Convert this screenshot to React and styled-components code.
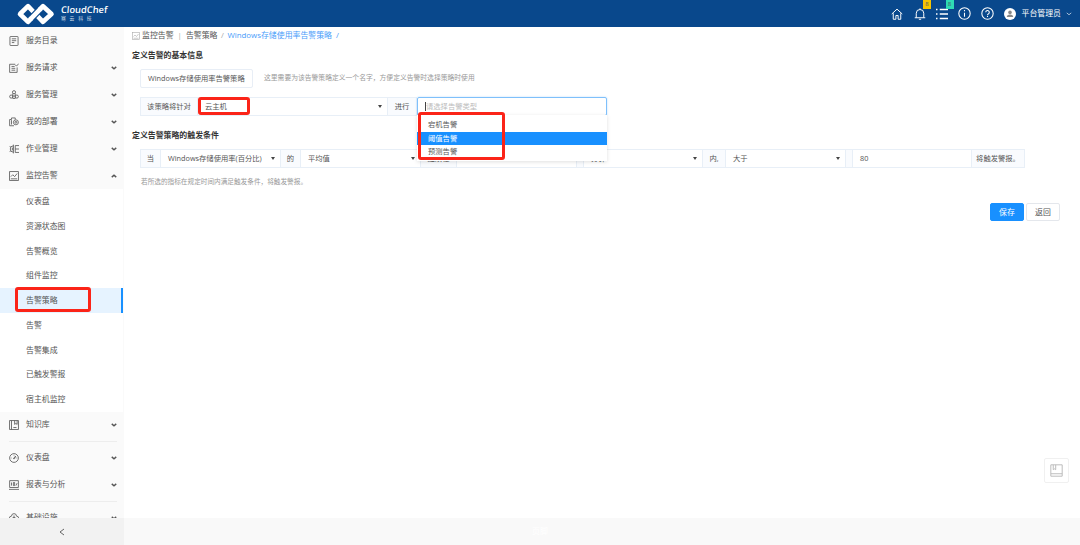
import styled, { createGlobalStyle } from 'styled-components';

const GlobalStyle = createGlobalStyle`
	* {
		box-sizing: border-box;
	}
	body {
		margin: 0;
		overflow: hidden;
		background: #fff;
		color: #555;
		font-family: 'Open Sans', 'Noto Sans CJK SC', sans-serif;
		font-size: 7.9px;
	}
`;

const ICONS = {
	catalog: <><rect x='1.500' y='0.700' width='13' height='14.600' rx='1' /><path d='M4.500 4.500h7M4.500 7.500h7M4.500 10.500h4' /></>,
	request: <><path d='M13 7v8H1V2h9' /><path d='M4 5.500h5M4 8.500h6M4 11.500h6M10 3l2 2 3.500-4' /></>,
	service: <><circle cx='8' cy='3.500' r='2.500' /><circle cx='3.500' cy='10.500' r='2.500' /><circle cx='12.500' cy='10.500' r='2.500' /><path d='M6 5.500v8M10 5.500v8M6 13.500h4M8 8v3' /></>,
	deploy: <><path d='M8 14H1V4h3V1.500h6V4' /><path d='M4 5v7' /><circle cx='11' cy='8.500' r='4' /><circle cx='11' cy='8.500' r='1.500' /></>,
	job: <><path d='M7 3a5 5 0 1 0 0 10M7 6a2 2 0 1 0 0 4M7 1v14M10 2.500h6M10 8h6M10 13.500h6M10 2.500v11M1 4l2 1M1 12l2-1' /></>,
	monitor: <><rect x='1' y='1' width='14' height='14' /><path d='M3 9l3-3 3 3 4-5M3 12.500h10' /></>,
	book: <><rect x='1' y='1' width='14' height='14' /><path d='M4 1v14M7 12h5M9 1v6l2-1.500L13 7V1' /></>,
	gauge: <><circle cx='8' cy='8' r='7' /><path d='M10.500 5L9 9H7zM8 3v1M3 8h1M12 8h1' /></>,
	report: <><path d='M1 1h14v11H1zM0 15h16M4 4v5M7 4h2v5H7zM11 9l2-4' /></>,
	infra: <><path d='M4 12a3.500 3.500 0 0 1 0-7 4 4 0 0 1 8 0 3.500 3.500 0 0 1 0 7' /><circle cx='8' cy='10' r='3' /><path d='M8 7V4M5 13l-2 2M11 13l2 2' /></>,
	home: <path d='M1 8l7-6.500L15 8M3 7v8h3.500v-5h3v5H13V7' />,
	bell: <path d='M1 13h14M3 13V7a5 5 0 0 1 10 0v6M8 2V.5M6.500 15h3' />,
	list: <path d='M0 2h2M5 2h11M0 8h2M5 8h11M0 14h2M5 14h11' />,
	info: <><circle cx='8' cy='8' r='7' /><path d='M8 7v5M8 3.700v1.500' /></>,
	help: <><circle cx='8' cy='8' r='7' /><path d='M5.800 6.500a2.200 2.200 0 1 1 3.200 2Q8 9 8 10M8 11.200v1.200' /></>,
	save: <><path d='M1 1h14v14H1zM1 12h14M4 1v6l1.500-1L7 7V1' /></>,
	down: <path d='M2 5l6 5 6-5' />,
	up: <path d='M2 11l6-5 6 5' />,
	left: <path d='M12 2L4 8l8 6' />,
};

const Icon = ({ name, size = 10, stroke = 1.3 }) => (
	<IconSvg $size={size} $stroke={stroke} viewBox='0 0 16 16'>{ICONS[name]}</IconSvg>
);

const MENU = [
	{ icon: 'catalog', label: '服务目录' },
	{ icon: 'request', label: '服务请求', arrow: 'down' },
	{ icon: 'service', label: '服务管理', arrow: 'down' },
	{ icon: 'deploy', label: '我的部署', arrow: 'down' },
	{ icon: 'job', label: '作业管理', arrow: 'down' },
	{ icon: 'monitor', label: '监控告警', arrow: 'up' },
];

const SUBMENU = ['仪表盘', '资源状态图', '告警概览', '组件监控', '告警策略', '告警', '告警集成', '已触发警报', '宿主机监控'];

const MenuItem = ({ icon, label, arrow }) => (
	<MenuRow>
		<Icon name={icon} />
		<MenuLabel>{label}</MenuLabel>
		{arrow && <Icon name={arrow} size={6} stroke={3.6} />}
	</MenuRow>
);

const Logo = () => (
	<LogoLink>
		<LogoMark viewBox='0 0 39 24'>
			<path d='M4 12L12 4.200L27 19.800L35.500 12L27 4.200L12 19.800Z' />
			<path d='M15.500 16.200L23.500 7.800' stroke='#09488c' strokeWidth='7' />
			<path d='M14 17.700L25 6.300' />
		</LogoMark>
		<LogoText>
			<LogoName>CloudChef</LogoName>
			<LogoSub>骞云科技</LogoSub>
		</LogoText>
	</LogoLink>
);

const Select = ({ width, children }) => (
	<Field $width={width}>
		<span>{children}</span>
		<Caret />
	</Field>
);

const App = () => {
	return (
		<Page>
			<GlobalStyle />
			<Header>
				<Logo />
				<Tools>
					<Tool><Icon name='home' size={12} /></Tool>
					<Tool>
						<Icon name='bell' size={12} />
						<Badge $color='#f5c400'>8</Badge>
					</Tool>
					<Tool>
						<Icon name='list' size={12} stroke={1.8} />
						<Badge $color='#2fdcb4'>8</Badge>
					</Tool>
					<Tool><Icon name='info' size={13} /></Tool>
					<Tool><Icon name='help' size={13} /></Tool>
					<Avatar viewBox='0 0 12 12'>
						<circle cx='6' cy='6' r='6' fill='#fff' />
						<circle cx='6' cy='4.400' r='1.800' fill='#888' />
						<path d='M2.800 9a3.200 2.500 0 0 1 6.400 0z' fill='#888' />
					</Avatar>
					<UserName>平台管理员</UserName>
					<Icon name='down' size={6} stroke={1.7} />
				</Tools>
			</Header>
			<Body>
				<Sidebar>
					<MenuScroll>
						{MENU.map((item) => <MenuItem key={item.label} {...item} />)}
						<SubMenu>
							{SUBMENU.map((label) => (
								<SubItem key={label} $active={label === '告警策略'}>
									{label}
									{label === '告警策略' && <Marker $left={15} $top={-1} $width={76} $height={25} />}
								</SubItem>
							))}
						</SubMenu>
						<MenuItem icon='book' label='知识库' arrow='down' />
						<Divider />
						<MenuItem icon='gauge' label='仪表盘' arrow='down' />
						<MenuItem icon='report' label='报表与分析' arrow='down' />
						<Divider />
						<MenuItem icon='infra' label='基础设施' arrow='down' />
					</MenuScroll>
					<Collapse><Icon name='left' size={8} stroke={1.8} /></Collapse>
				</Sidebar>
				<Main>
					<Content>
						<Breadcrumb>
							<CrumbIcon><Icon name='monitor' size={8} stroke={1.2} /></CrumbIcon>
							<span>监控告警</span>
							<Separator $space={4}>|</Separator>
							<span>告警策略</span>
							<Separator $space={3.5}>/</Separator>
							<Current>Windows存储使用率告警策略</Current>
							<Current $slash>/</Current>
						</Breadcrumb>
						<Title>定义告警的基本信息</Title>
						<NameRow>
							<NameInput>Windows存储使用率告警策略</NameInput>
							<Hint>这里需要为该告警策略定义一个名字，方便定义告警时选择策略时使用</Hint>
						</NameRow>
						<FormRow>
							<Addon $width={57}>该策略将针对</Addon>
							<Select width={190}>云主机</Select>
							<Addon $width={29}>进行</Addon>
							<TypeSelect>
								<Placeholder>请选择告警类型</Placeholder>
								<Dropdown>
									<Option>宕机告警</Option>
									<Option $active>阈值告警</Option>
									<Option>预测告警</Option>
									<Marker $left={1} $top={-3} $width={87} $height={48} />
								</Dropdown>
							</TypeSelect>
							<Marker $left={57} $top={0} $width={52} $height={18} />
						</FormRow>
						<Title $second>定义告警策略的触发条件</Title>
						<FormRow $last>
							<Addon $width={20}>当</Addon>
							<Select width={120}>Windows存储使用率(百分比)</Select>
							<Addon $width={20}>的</Addon>
							<Select width={120}>平均值</Select>
							<Addon $width={36}>连续在</Addon>
							<Field $width={120} />
							<Addon $width={7} />
							<Select width={119}>分钟</Select>
							<Addon $width={23}>内,</Addon>
							<Select width={120}>大于</Select>
							<Addon $width={7} />
							<Field $width={119}>80</Field>
							<Addon $width={53}>将触发警报。</Addon>
						</FormRow>
						<Note>若所选的指标在规定时间内满足触发条件，将触发警报。</Note>
						<Actions>
							<Button $primary>保存</Button>
							<Button>返回</Button>
						</Actions>
						<SaveTool><Icon name='save' size={13} stroke={1.2} /></SaveTool>
					</Content>
					<Footer>页脚</Footer>
				</Main>
			</Body>
		</Page>
	);
};

const IconSvg = styled.svg`
	width: ${({ $size }) => $size}px;
	height: ${({ $size }) => $size}px;
	flex: none;
	fill: none;
	stroke: currentColor;
	stroke-width: ${({ $stroke }) => $stroke};
`;

const Page = styled.div`
	width: 1080px;
	height: 545px;
	display: flex;
	flex-direction: column;
	line-height: 1;
	white-space: nowrap;
`;

const Header = styled.header`
	height: 27px;
	flex: none;
	display: flex;
	justify-content: space-between;
	align-items: center;
	padding: 0 8px 0 16px;
	background: #09488c;
	color: #fff;
`;

const LogoLink = styled.div`
	display: flex;
	align-items: center;
	gap: 6px;
`;

const LogoMark = styled.svg`
	width: 39px;
	height: 24px;
	fill: none;
	stroke: #fff;
	stroke-width: 4.6;
	stroke-linejoin: round;
`;

const LogoText = styled.div`
	display: flex;
	flex-direction: column;
	gap: 1px;
	padding-bottom: 2px;
`;

const LogoName = styled.span`
	font: 600 9.3px/11px 'Open Sans', sans-serif;
	transform: skewX(-5deg);
`;

const LogoSub = styled.span`
	font-size: 4.8px;
	letter-spacing: 3.8px;
	opacity: .8;
`;

const Tools = styled.div`
	height: 27px;
	display: flex;
	align-items: center;
`;

const Tool = styled.div`
	position: relative;
	width: 22.5px;
	display: flex;
	justify-content: center;
`;

const Badge = styled.span`
	position: absolute;
	top: -8px;
	right: 0;
	width: 8px;
	height: 9px;
	background: ${({ $color }) => $color};
	color: #456;
	font-size: 6px;
	line-height: 9px;
	text-align: center;
`;

const Avatar = styled.svg`
	width: 12px;
	height: 12px;
	margin-left: 5px;
`;

const UserName = styled.span`
	margin: 0 5px 0 6px;
`;

const Body = styled.div`
	flex: 1;
	min-height: 0;
	display: flex;
`;

const Sidebar = styled.aside`
	width: 124px;
	flex: none;
	display: flex;
	flex-direction: column;
	background: #fafafa;
`;

const MenuScroll = styled.nav`
	height: 491px;
	overflow: hidden;
`;

const MenuRow = styled.div`
	height: 27px;
	display: flex;
	align-items: center;
	padding: 0 7px 0 9px;
`;

const MenuLabel = styled.span`
	flex: 1;
	margin-left: 7px;
`;

const SubMenu = styled.div`
	width: 123px;
	background: #fff;
`;

const SubItem = styled.div`
	position: relative;
	height: 24.75px;
	padding-left: 26px;
	line-height: 25px;
	background: ${({ $active }) => ($active ? '#e6f3ff' : '#fff')};
	box-shadow: ${({ $active }) => ($active ? 'inset -2px 0 #1890ff' : 'none')};
`;

/* red frame laid over the highlighted control */
const Marker = styled.div`
	position: absolute;
	z-index: 3;
	left: ${({ $left }) => $left}px;
	top: ${({ $top }) => $top}px;
	width: ${({ $width }) => $width}px;
	height: ${({ $height }) => $height}px;
	border: 3px solid #fb2418;
	border-radius: 3px;
`;

const Divider = styled.div`
	height: 1px;
	margin: 2px 7px 3px 9px;
	background: #ededed;
`;

const Collapse = styled.div`
	height: 27px;
	display: flex;
	align-items: center;
	justify-content: center;
	background: #f2f2f2;
`;

const Main = styled.main`
	flex: 1;
	display: flex;
	flex-direction: column;
`;

const Content = styled.section`
	height: 491px;
	display: flex;
	flex-direction: column;
	align-items: flex-start;
	padding: 4px 11px 0 8px;
`;

const Breadcrumb = styled.div`
	height: 10px;
	display: flex;
	align-items: center;
`;

const CrumbIcon = styled.span`
	display: flex;
	margin-right: 2px;
	color: #aaa;
`;

const Separator = styled.span`
	margin: 0 ${({ $space }) => $space}px;
	color: #aaa;
`;

const Current = styled.span`
	margin-left: ${({ $slash }) => ($slash ? 4 : 0)}px;
	color: #4a9dfa;
`;

const Title = styled.h3`
	height: 10px;
	margin: ${({ $second }) => ($second ? '14px 0 9px' : '9px 0 9px')};
	font-size: 7.9px;
	line-height: 10px;
	color: #333;
`;

const NameRow = styled.div`
	display: flex;
	align-items: center;
	margin-left: 8px;
`;

const NameInput = styled.div`
	width: 113px;
	height: 19px;
	padding-left: 7px;
	border: 1px solid #e8eef6;
	border-radius: 2px;
	font-size: 7.3px;
	line-height: 17px;
`;

const Hint = styled.span`
	margin-left: 11px;
	font-size: 6.8px;
	color: #999;
`;

const FormRow = styled.div`
	position: relative;
	display: flex;
	margin: ${({ $last }) => ($last ? '0' : '9px')} 0 0 8px;
	font-size: 7.3px;
	border-left: 1px solid #e8eff7;
`;

const Addon = styled.div`
	width: ${({ $width }) => $width}px;
	height: 19px;
	display: flex;
	align-items: center;
	justify-content: center;
	background: #f9fbfe;
	border: solid #e8eff7;
	border-width: 1px 1px 1px 0;
`;

const Field = styled.div`
	width: ${({ $width }) => $width}px;
	height: 19px;
	display: flex;
	align-items: center;
	justify-content: space-between;
	padding: 0 5px 0 7px;
	background: #fff;
	border: solid #e8eff7;
	border-width: 1px 1px 1px 0;
`;

const Caret = styled.i`
	border: 2.5px solid transparent;
	border-top: 3px solid #444;
	border-bottom: 0;
`;

const TypeSelect = styled.div`
	position: relative;
	width: 190px;
	height: 19px;
	padding: 4px 7px;
	border: 1px solid #7fc0fb;
	border-radius: 2px;
	box-shadow: 0 0 2px #b5dafb;
`;

const Placeholder = styled.div`
	height: 9px;
	border-left: 1px solid #444;
	line-height: 8px;
	color: #bbb;
`;

const Dropdown = styled.div`
	position: absolute;
	z-index: 2;
	top: 17px;
	left: -1px;
	width: 190px;
	height: 46px;
	padding-top: 3px;
	background: #fff;
	box-shadow: 0 1px 4px rgba(0, 0, 0, .13);
`;

const Option = styled.div`
	height: 13.5px;
	padding-left: 11px;
	line-height: 12px;
	background: ${({ $active }) => ($active ? '#1890ff' : '#fff')};
	color: ${({ $active }) => ($active ? '#fff' : '#555')};
`;

const Note = styled.p`
	margin: 11px 0 0 9px;
	font-size: 6.65px;
	color: #999;
`;

const Actions = styled.div`
	align-self: flex-end;
	display: flex;
	gap: 2px;
	margin: 17px 9px 0 0;
`;

const Button = styled.button`
	width: 34px;
	height: 18px;
	padding: 0;
	border: 1px solid ${({ $primary }) => ($primary ? '#1890ff' : '#e4e7ec')};
	border-radius: 2px;
	background: ${({ $primary }) => ($primary ? '#1890ff' : '#fff')};
	color: ${({ $primary }) => ($primary ? '#fff' : '#555')};
	font-family: inherit;
	font-size: 7.9px;
	line-height: 16px;
`;

const SaveTool = styled.div`
	width: 25px;
	height: 25px;
	margin: auto 0 35px auto;
	display: flex;
	align-items: center;
	justify-content: center;
	border: 1px solid #f0f0f0;
	border-radius: 2px;
	color: #bbb;
`;

const Footer = styled.footer`
	height: 27px;
	padding-right: 124px;
	background: #f9f9f9;
	color: #fff;
	line-height: 27px;
	text-align: center;
`;

export default App;
